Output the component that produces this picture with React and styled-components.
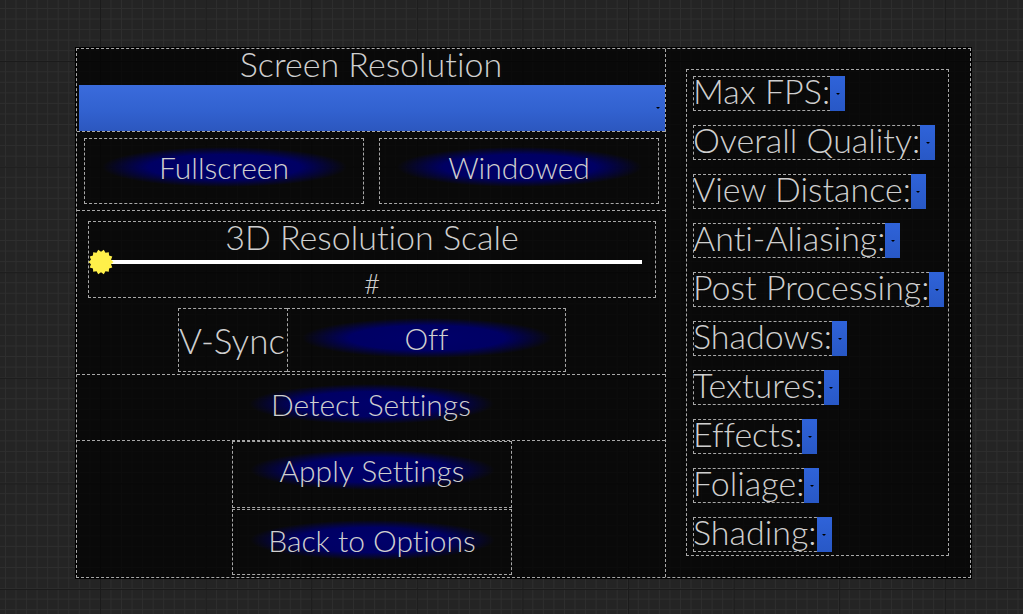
import React from "react";
import styled, { createGlobalStyle } from "styled-components";

const GlobalStyle = createGlobalStyle`
  html, body { margin: 0; padding: 0; }
  body {
    width: 1023px;
    height: 614px;
    overflow: hidden;
    background-color: #242424;
    background-image:
      linear-gradient(to right, #1b1b1b 1px, transparent 1px),
      linear-gradient(to bottom, #1b1b1b 1px, transparent 1px),
      linear-gradient(to right, #2e2e2e 1px, transparent 1px),
      linear-gradient(to bottom, #2e2e2e 1px, transparent 1px);
    background-size: 105.6px 100%, 100% 105.6px, 10.56px 100%, 100% 10.56px;
    background-position: 100px 0, 0 61px, 5px 0, 0 8px;
    font-family: "Lato", "Open Sans", "Liberation Sans", sans-serif;
    font-weight: 300;
    font-variant-ligatures: none;
    color: #cfcfcf;
  }
`;

const DASH = "#a8a8a8";

const Page = styled.div`
  box-sizing: border-box;
  width: 1023px;
  height: 614px;
  padding: 48px 0 0 76px;
`;

const Canvas = styled.div`
  box-sizing: border-box;
  width: 895px;
  height: 530px;
  border: 1px dashed ${DASH};
  outline: 1px solid #000;
  background: rgba(0, 0, 0, 0.74);
  display: grid;
  grid-template-columns: 589px 1fr;
`;

const LeftCol = styled.div`
  display: flex;
  flex-direction: column;
  border-right: 1px dashed ${DASH};
  min-height: 0;
`;

const Title = styled.div`
  height: 36px;
  font-size: 34px;
  line-height: 30px;
  text-align: center;
  white-space: nowrap;
`;

const ComboBar = styled.div`
  position: relative;
  height: 46px;
  margin-left: 2px;
  background: linear-gradient(to bottom, #3a6bdc 0%, #3262d0 55%, #2c57bf 100%);
`;

const Arrow = styled.span`
  position: absolute;
  width: 0;
  height: 0;
  border-left: 2px solid transparent;
  border-right: 2px solid transparent;
  border-top: 2px solid #000;
  ${(p) => (p.$corner ? "right: 5px; top: 22px;" : "left: 50%; top: 50%; margin-left: -2px; margin-top: -1px;")}
`;

const ToggleRow = styled.div`
  box-sizing: border-box;
  height: 80px;
  border-top: 1px dashed ${DASH};
  border-bottom: 1px dashed ${DASH};
  padding: 6px 0 0 7px;
  display: flex;
  gap: 15px;
  align-items: flex-start;
`;

const DashedBox = styled.div`
  box-sizing: border-box;
  width: ${(p) => p.$w}px;
  height: ${(p) => p.$h}px;
  border: 1px dashed ${DASH};
  display: flex;
  align-items: center;
  justify-content: center;
  padding-bottom: ${(p) => p.$lift || 0}px;
`;

const Pill = styled.div`
  width: ${(p) => p.$w || 245}px;
  height: 40px;
  display: flex;
  align-items: center;
  justify-content: center;
  font-size: 30px;
  line-height: 30px;
  white-space: nowrap;
  background: radial-gradient(closest-side, #00006a 0%, #000064 62%, rgba(0, 0, 70, 0) 100%);
`;

const SliderBox = styled.div`
  box-sizing: border-box;
  width: 568px;
  height: 77px;
  margin: 10px 0 0 11px;
  border: 1px dashed ${DASH};
  display: flex;
  flex-direction: column;
  align-items: center;
`;

const SliderTitle = styled.div`
  height: 32px;
  font-size: 34px;
  line-height: 30px;
  white-space: nowrap;
`;

const TrackRow = styled.div`
  align-self: stretch;
  height: 16px;
  display: flex;
  align-items: center;
  padding: 0 13px 0 11px;
`;

const Track = styled.div`
  position: relative;
  flex: 1;
  height: 4px;
  background: #fff;
`;

const Thumb = styled.svg`
  position: absolute;
  left: -12px;
  top: -11px;
  width: 26px;
  height: 26px;
`;

const Hash = styled.div`
  height: 27px;
  font-size: 28px;
  line-height: 26px;
`;

const VsyncRow = styled.div`
  display: flex;
  justify-content: center;
  margin: 10px 0 0 2px;
  height: 64px;
`;

const VsyncLabel = styled.div`
  box-sizing: border-box;
  width: 109px;
  height: 64px;
  border: 1px dashed ${DASH};
  border-right: none;
  font-size: 35px;
  line-height: 54px;
  white-space: nowrap;
  display: flex;
  align-items: center;
`;

const DetectRow = styled.div`
  box-sizing: border-box;
  margin-top: 2px;
  height: 67px;
  border-top: 1px dashed ${DASH};
  border-bottom: 1px dashed ${DASH};
  display: flex;
  align-items: center;
  justify-content: center;
  padding-bottom: 8px;
`;

const BottomStack = styled.div`
  display: flex;
  flex-direction: column;
  align-items: center;
  margin-left: 2px;
  gap: 1px;
`;

const RightCol = styled.div`
  padding: 20px 0 0 20px;
`;

const Panel = styled.div`
  box-sizing: border-box;
  width: 263px;
  height: 487px;
  border: 1px dashed ${DASH};
  padding: 6px 0 0 6px;
  display: flex;
  flex-direction: column;
  align-items: flex-start;
  gap: 14px;
`;

const SettingRow = styled.div`
  box-sizing: border-box;
  height: 35px;
  display: flex;
  border: 1px dashed ${DASH};
`;

const SettingLabel = styled.div`
  font-size: 34px;
  line-height: 27px;
  white-space: nowrap;
  margin-left: -1px;
`;

const MiniCombo = styled.div`
  position: relative;
  width: 15px;
  margin: -1px -1px -1px 0;
  background: linear-gradient(to bottom, #2f63d9 0%, #2858c6 100%);
`;

const settings = [
  "Max FPS:",
  "Overall Quality:",
  "View Distance:",
  "Anti-Aliasing:",
  "Post Processing:",
  "Shadows:",
  "Textures:",
  "Effects:",
  "Foliage:",
  "Shading:",
];

function StarThumb() {
  const pts = [];
  const n = 14;
  for (let i = 0; i < n * 2; i++) {
    const r = i % 2 === 0 ? 12.5 : 10.3;
    const a = (Math.PI * i) / n;
    pts.push(`${(13 + r * Math.cos(a)).toFixed(2)},${(13 + r * Math.sin(a)).toFixed(2)}`);
  }
  return (
    <Thumb viewBox="0 0 26 26">
      <polygon points={pts.join(" ")} fill="#fff04a" />
    </Thumb>
  );
}

export default function App() {
  return (
    <>
      <GlobalStyle />
      <Page>
        <Canvas>
          <LeftCol>
            <Title>Screen Resolution</Title>
            <ComboBar>
              <Arrow $corner />
            </ComboBar>
            <ToggleRow>
              <DashedBox $w={280} $h={66} $lift={8}>
                <Pill>Fullscreen</Pill>
              </DashedBox>
              <DashedBox $w={280} $h={66} $lift={8}>
                <Pill>Windowed</Pill>
              </DashedBox>
            </ToggleRow>
            <SliderBox>
              <SliderTitle>3D Resolution Scale</SliderTitle>
              <TrackRow>
                <Track>
                  <StarThumb />
                </Track>
              </TrackRow>
              <Hash>#</Hash>
            </SliderBox>
            <VsyncRow>
              <VsyncLabel>V-Sync</VsyncLabel>
              <DashedBox $w={279} $h={64} $lift={4}>
                <Pill $w={250}>Off</Pill>
              </DashedBox>
            </VsyncRow>
            <DetectRow>
              <Pill>Detect Settings</Pill>
            </DetectRow>
            <BottomStack>
              <DashedBox $w={280} $h={67} $lift={9}>
                <Pill>Apply Settings</Pill>
              </DashedBox>
              <DashedBox $w={280} $h={66} $lift={5}>
                <Pill>Back to Options</Pill>
              </DashedBox>
            </BottomStack>
          </LeftCol>
          <RightCol>
            <Panel>
              {settings.map((s) => (
                <SettingRow key={s}>
                  <SettingLabel>{s}</SettingLabel>
                  <MiniCombo>
                    <Arrow />
                  </MiniCombo>
                </SettingRow>
              ))}
            </Panel>
          </RightCol>
        </Canvas>
      </Page>
    </>
  );
}
